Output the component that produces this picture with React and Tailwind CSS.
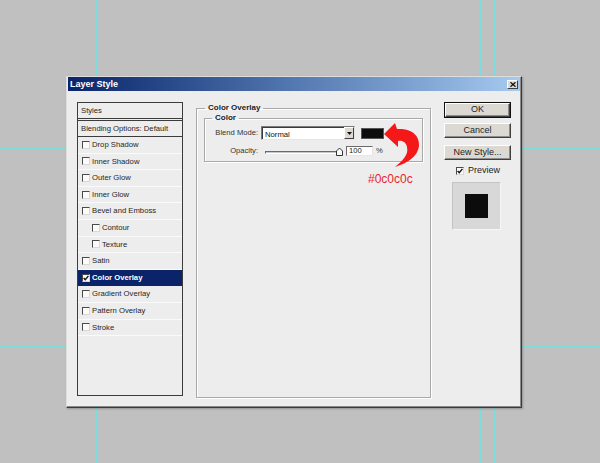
import React from "react";

const FONT = { fontFamily: '"Liberation Sans", Arial, sans-serif' };

const EFFECTS = [
  { label: "Drop Shadow" },
  { label: "Inner Shadow" },
  { label: "Outer Glow" },
  { label: "Inner Glow" },
  { label: "Bevel and Emboss" },
  { label: "Contour", indent: true },
  { label: "Texture", indent: true },
  { label: "Satin" },
  { label: "Color Overlay", checked: true, selected: true },
  { label: "Gradient Overlay" },
  { label: "Pattern Overlay" },
  { label: "Stroke" },
];

function Check({ checked }) {
  return (
    <span className="flex-none w-[8px] h-[8px] bg-[#fbfbfb] border border-t-[#4a4a4a] border-l-[#4a4a4a] border-r-[#d8d8d8] border-b-[#d8d8d8] flex items-center justify-center">
      {checked && (
        <svg width="6" height="6" viewBox="0 0 6 6">
          <path d="M0.6 3 L2.3 4.8 L5.4 0.9" fill="none" stroke="#111" strokeWidth="1.4" />
        </svg>
      )}
    </span>
  );
}

function Button({ children, primary, className = "" }) {
  return (
    <div className={`${primary ? "border border-[#111]" : ""} ${className}`}>
      <div className="h-full bg-[#dcd9d2] border border-t-white border-l-white border-r-[#404040] border-b-[#404040] shadow-[inset_-1px_-1px_0_#8c8c8c] flex items-center justify-center text-[9px] text-[#1e1e1e]">
        {children}
      </div>
    </div>
  );
}

export default function App() {
  return (
    <div className="relative w-[600px] h-[463px] bg-[#c0c0c0] overflow-hidden pt-[76px] pl-[66px]" style={FONT}>
      {/* guides */}
      <div className="absolute top-0 bottom-0 left-[96px] w-px bg-[#7fdcdc]" />
      <div className="absolute top-0 bottom-0 left-[111px] w-px bg-[#7fdcdc]" />
      <div className="absolute top-0 bottom-0 left-[480px] w-px bg-[#7fdcdc]" />
      <div className="absolute top-0 bottom-0 left-[494px] w-px bg-[#7fdcdc]" />
      <div className="absolute left-0 right-0 top-[133px] h-px bg-[#7fdcdc]" />
      <div className="absolute left-0 right-0 top-[148px] h-px bg-[#7fdcdc]" />
      <div className="absolute left-0 right-0 top-[346px] h-px bg-[#7fdcdc]" />
      <div className="absolute left-0 right-0 top-[361px] h-px bg-[#7fdcdc]" />

      {/* dialog */}
      <div className="relative z-10 w-[456px] h-[332px] bg-[#ededed] border border-t-[#dedede] border-l-[#dedede] border-r-[#3a3a3a] border-b-[#3a3a3a] shadow-[inset_-1px_-1px_0_#8a8a8a,1px_1px_2px_rgba(0,0,0,0.25)] px-[1px]">
        <div className="h-[14px] bg-gradient-to-r from-[#0a246a] via-[#5478b0] to-[#a6caf0] flex items-center justify-between pl-[2px] pr-[2px]">
          <span className="text-white font-bold text-[9px] leading-none">Layer Style</span>
          <div className="w-[11px] h-[9px] bg-[#dcd9d2] border border-t-white border-l-white border-r-[#404040] border-b-[#404040] flex items-center justify-center">
            <svg width="6" height="5" viewBox="0 0 6 5">
              <path d="M0.5 0.3 L5.5 4.7 M5.5 0.3 L0.5 4.7" stroke="#111" strokeWidth="1.3" />
            </svg>
          </div>
        </div>

        <div className="flex pl-[9px] pt-[11px] items-start">
          {/* styles list */}
          <div className="w-[106px] h-[294px] border border-[#3c3c3c] text-[7.7px] text-[#262626] flex flex-col">
            <div className="h-[16px] border-b border-[#3c3c3c] flex items-center pl-[3px]">Styles</div>
            <div className="mt-[1px] h-[17px] border-t border-b border-[#3c3c3c] flex items-center pl-[3px]">
              Blending Options: Default
            </div>
            {EFFECTS.map((e) => (
              <div
                key={e.label}
                className={`h-[16.6px] flex-none flex items-center gap-[2px] border-b ${
                  e.selected ? "bg-[#0b2368] text-white font-bold border-[#0b2368]" : "border-[#fafafa]"
                } ${e.indent ? "pl-[14px]" : "pl-[4px]"}`}
              >
                <Check checked={e.checked} />
                <span className="whitespace-nowrap">{e.label}</span>
              </div>
            ))}
          </div>

          {/* color overlay group */}
          <fieldset className="ml-[13px] mt-[1px] w-[235px] h-[295px] border border-[#a9a9a9] shadow-[inset_1px_1px_0_#fff,1px_1px_0_#fff] px-[7px] min-w-0">
            <legend className="ml-[1px] px-[3px] font-bold text-[8px] leading-[10px] text-[#222]">Color Overlay</legend>
            <fieldset className="w-full border border-[#a9a9a9] shadow-[inset_1px_1px_0_#fff,1px_1px_0_#fff] pb-[5px] min-w-0">
              <legend className="ml-[7px] px-[3px] font-bold text-[8px] leading-[10px] text-[#222]">Color</legend>
              <div className="mt-[3px] flex items-center text-[7.6px] text-[#333]">
                <span className="w-[53px] text-right">Blend Mode:</span>
                <div className="ml-[3px] w-[94px] h-[14px] bg-white border border-t-[#7a7a7a] border-l-[#7a7a7a] border-r-[#e6e6e6] border-b-[#e6e6e6] shadow-[inset_1px_1px_0_#3a3a3a] flex">
                  <span className="flex-1 pl-[3px] pt-[2px] text-[7.7px] text-[#111]">Normal</span>
                  <div className="w-[10px] bg-[#dcd9d2] border border-t-white border-l-white border-r-[#404040] border-b-[#404040] flex items-center justify-center">
                    <svg width="5" height="3" viewBox="0 0 5 3">
                      <path d="M0 0 H5 L2.5 3 Z" fill="#111" />
                    </svg>
                  </div>
                </div>
                <div className="ml-[6px] w-[23px] h-[11px] bg-[#0c0c0c] border border-[#555]" />
              </div>
              <div className="mt-[6px] flex items-center h-[10px] text-[7.6px] text-[#333]">
                <span className="w-[53px] text-right">Opacity:</span>
                <div className="relative ml-[7px] w-[78px] h-[10px] flex-none">
                  <div className="absolute left-0 right-[5px] top-[5px] h-[3px] bg-[#c8c8c8] border border-t-[#6a6a6a] border-l-[#6a6a6a] border-r-white border-b-white" />
                  <svg className="absolute right-0 top-[1px]" width="7" height="9" viewBox="0 0 7 9">
                    <path d="M0.5 8.5 V4 L3.5 1 L6.5 4 V8.5 Z" fill="#fafafa" stroke="#333" strokeWidth="1" />
                  </svg>
                </div>
                <div className="ml-[3px] w-[27px] h-[10px] bg-white border border-t-[#6a6a6a] border-l-[#6a6a6a] border-r-[#e6e6e6] border-b-[#e6e6e6] pl-[2px] text-[7.6px] leading-[8px] text-[#222]">
                  100
                </div>
                <span className="ml-[3px]">%</span>
              </div>
            </fieldset>
            <div className="mt-[11px] ml-[164px] text-[12px] leading-[12px] text-[#e8262b]">#0c0c0c</div>
          </fieldset>

          {/* buttons */}
          <div className="ml-[13px] w-[67px] flex flex-col">
            <Button primary className="h-[16px]">OK</Button>
            <Button className="mt-[5px] h-[15px]">Cancel</Button>
            <Button className="mt-[7px] h-[15px]">New Style...</Button>
            <div className="mt-[7px] ml-[12px] h-[8px] flex items-center gap-[4px] text-[9px] text-[#222]">
              <Check checked />
              <span>Preview</span>
            </div>
            <div className="mt-[7px] ml-[8px] w-[49px] h-[48px] bg-[#d8d8d8] border border-t-[#c4c4c4] border-l-[#c4c4c4] border-r-[#f6f6f6] border-b-[#f6f6f6] flex items-center justify-center">
              <div className="w-[23px] h-[24px] bg-[#0c0c0c]" />
            </div>
          </div>
        </div>

        {/* red annotation arrow */}
        <svg className="absolute left-[313px] top-[42px]" width="45" height="52" viewBox="0 0 45 52">
          <path
            d="M4 15 L15 4 L17 10 C28 9 40 14 39 27 C38 37 28 44 15 48 C22 42 29 36 27 28 C26 23 22 21 18 22 L18 28 Z"
            fill="#f41818"
          />
        </svg>
      </div>
    </div>
  );
}
